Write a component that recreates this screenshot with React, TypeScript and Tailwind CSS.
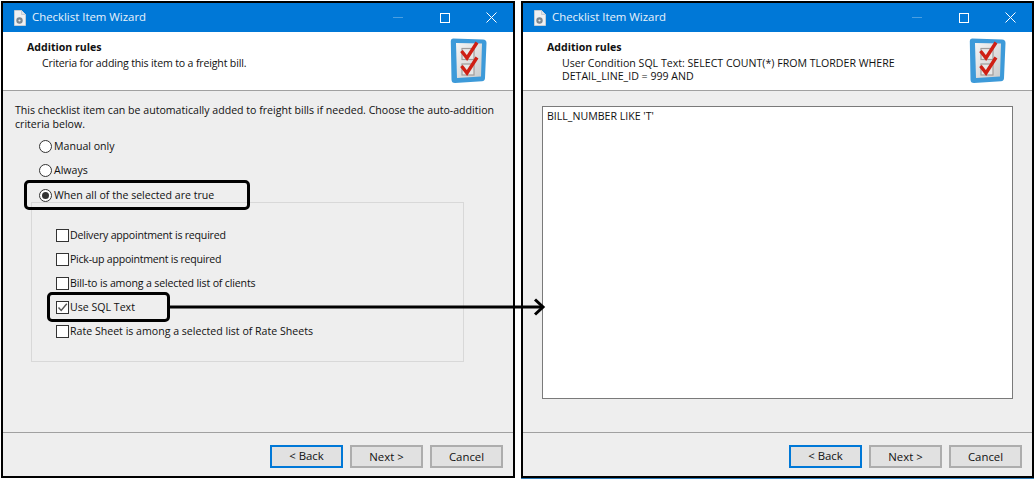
import React from "react";

const font = { fontFamily: '"Open Sans", "Noto Sans", sans-serif' };

function FileIcon() {
  return (
    <svg width="16" height="18" viewBox="0 0 16 18" className="shrink-0">
      <path d="M2.5 1.5h7l4 4v11h-11z" fill="#eef0f2" stroke="#c4ccd4" />
      <path d="M9.5 1.5v4h4" fill="#dfe3e7" stroke="#c4ccd4" />
      <circle cx="7.5" cy="11.5" r="3.2" fill="#7c8790" />
      <circle cx="7.5" cy="11.5" r="1.1" fill="#e6e9ec" />
    </svg>
  );
}

function ChecklistIcon() {
  return (
    <svg width="38" height="47" viewBox="0 0 38 47" className="shrink-0">
      <defs>
        <linearGradient id="pg" x1="0" y1="0" x2="1" y2="1">
          <stop offset="0" stopColor="#f5f5f5" />
          <stop offset="1" stopColor="#c9cbcc" />
        </linearGradient>
      </defs>
      <path d="M3 1.5 L33 2.5 Q36.5 2.7 36.5 6 L35 41 Q35 44 32 44.2 L5 46 Q1.5 46 1.5 42.5 L.8 4 Q.8 1.5 3 1.5z" fill="#3d9ad9" />
      <path d="M6 6 L32 6.5 L31 39.5 L7 41z" fill="url(#pg)" />
      <rect x="12" y="11.5" width="12" height="11" fill="#e8e8e8" stroke="#a09c9a" strokeWidth="1.2" />
      <rect x="12" y="27" width="12" height="11" fill="#e8e8e8" stroke="#a09c9a" strokeWidth="1.2" />
      <path d="M11.5 14 L17 21 L27 5.5" fill="none" stroke="#cf1f14" strokeWidth="3.4" />
      <path d="M11.5 29 L17 36 L27 20.5" fill="none" stroke="#cf1f14" strokeWidth="3.4" />
    </svg>
  );
}

function Radio({ label, checked, className }: { label: string; checked?: boolean; className: string }) {
  return (
    <div className={`flex items-center h-[16px] ${className}`}>
      <span className="w-[13px] h-[13px] rounded-full border border-[#333333] bg-white flex items-center justify-center shrink-0">
        {checked && <span className="w-[7px] h-[7px] rounded-full bg-[#333333]" />}
      </span>
      <span className="ml-[2px] pt-[2px] whitespace-nowrap">{label}</span>
    </div>
  );
}

function Check({ label, checked, tight }: { label: string; checked?: boolean; tight?: string }) {
  return (
    <div className="flex items-center h-[16px]">
      <span className="w-[13px] h-[13px] border border-[#333333] bg-white flex items-center justify-center shrink-0">
        {checked && (
          <svg width="11" height="11" viewBox="0 0 11 11">
            <path d="M1.5 5.5 L4.2 8.5 L9.8 1.8" fill="none" stroke="#555555" strokeWidth="1.4" />
          </svg>
        )}
      </span>
      <span className={`ml-[1px] pt-[2px] whitespace-nowrap ${tight ?? ""}`}>{label}</span>
    </div>
  );
}

function Btn({ label, primary }: { label: string; primary?: boolean }) {
  return (
    <div
      className={`w-[73px] h-[23px] flex items-center justify-center bg-[#e1e1e1] text-[#111111] text-[11.4px] ${
        primary ? "border-2 border-[#0078d7] pb-[2px]" : "border-2 border-[#adadad]"
      }`}
    >
      {label}
    </div>
  );
}

function Window({
  width,
  header,
  children,
  blueEdge,
}: {
  width: string;
  header: React.ReactNode;
  children: React.ReactNode;
  blueEdge?: boolean;
}) {
  return (
    <div className={`${width} h-[477px] border-2 border-black flex flex-col bg-[#eeeeee] relative`}>
      <div className="h-[29px] bg-[#0078d7] flex items-center text-white shrink-0">
        <div className="ml-[9px] mr-[4px] flex"><FileIcon /></div>
        <span className="text-[11.4px] text-[#eaf3fb] pb-[1px]">Checklist Item Wizard</span>
        <div className="ml-auto flex items-center h-full">
          <div className="w-[46px] flex justify-center"><div className="w-[10px] h-px bg-[#4a9fe2]" /></div>
          <div className="w-[48px] flex justify-center"><div className="w-[10px] h-[10px] border border-white" /></div>
          <div className="w-[44px] flex justify-center">
            <svg width="11" height="11" viewBox="0 0 11 11">
              <path d="M.5 .5 L10.5 10.5 M10.5 .5 L.5 10.5" stroke="#ffffff" strokeWidth="1" />
            </svg>
          </div>
        </div>
      </div>
      <div className="h-[58px] bg-white border-b border-[#a0a0a0] flex shrink-0 box-content">
        <div className="pl-[24px] pt-[9px] flex-1 leading-[13px]">{header}</div>
        <div className="pt-[5px] pr-[25px]"><ChecklistIcon /></div>
      </div>
      <div className="flex-1 relative">{children}</div>
      <div className="h-[31px] border-t border-[#a0a0a0] flex justify-end items-start gap-[7px] pt-[12px] pr-[10px] box-content shrink-0">
        <Btn label="< Back" primary />
        <Btn label="Next >" />
        <Btn label="Cancel" />
      </div>
      {blueEdge && <div className="absolute left-[-2px] right-[-2px] bottom-[-3px] h-px bg-[#2a7ab8]" />}
    </div>
  );
}

export default function App() {
  return (
    <div className="relative w-[1035px] h-[479px] bg-white overflow-hidden text-[10.6px] text-[#111111]" style={font}>
      <div className="flex gap-[6px] pl-px pt-px">
        <Window
          width="w-[514px]"
          header={
            <>
              <div className="font-bold mb-[3px]">Addition rules</div>
              <div className="pl-[15px] tracking-[-0.17px]">Criteria for adding this item to a freight bill.</div>
            </>
          }
        >
          <div className="pl-[12px] pt-[12px] flex flex-col">
            <p className="w-[490px] leading-[14px]">
              This checklist item can be automatically added to freight bills if needed. Choose the auto-addition criteria below.
            </p>
            <div className="pl-[24px] pt-[7px] flex flex-col">
              <Radio label="Manual only" className="" />
              <Radio label="Always" className="mt-[8px]" />
              <Radio label="When all of the selected are true" checked className="mt-[9px]" />
            </div>
            <div className="ml-[16px] -mt-px w-[433px] h-[160px] border border-[#d8d8d8] pl-[24px] pt-[24px] flex flex-col gap-[8px]">
              <Check label="Delivery appointment is required" tight="tracking-[-0.22px]" />
              <Check label="Pick-up appointment is required" tight="tracking-[-0.25px]" />
              <Check label="Bill-to is among a selected list of clients" tight="tracking-[-0.16px]" />
              <Check label="Use SQL Text" checked />
              <Check label="Rate Sheet is among a selected list of Rate Sheets" />
            </div>
          </div>
        </Window>
        <Window
          width="w-[513px]"
          blueEdge
          header={
            <>
              <div className="font-bold mb-[3px]">Addition rules</div>
              <div className="pl-[15px] w-[400px]">User Condition SQL Text: SELECT COUNT(*) FROM TLORDER WHERE DETAIL_LINE_ID = 999 AND</div>
            </>
          }
        >
          <div className="pl-[19px] pt-[15px]">
            <div className="w-[471px] h-[293px] bg-white border border-[#7a7a7a] px-[4px] pt-[2px]">BILL_NUMBER LIKE 'T'</div>
          </div>
        </Window>
      </div>
      <div className="absolute left-[24px] top-[180px] w-[226px] h-[30px] border-[3px] border-black rounded-[5px]" />
      <div className="absolute left-[47px] top-[292px] w-[123px] h-[30px] border-[3px] border-black rounded-[5px]" />
      <svg className="absolute left-[168px] top-[295px]" width="378" height="24" viewBox="0 0 378 24">
        <path d="M0 12 H374" stroke="#000000" strokeWidth="3" />
        <path d="M367 4.5 L375 12 L367 19.5" fill="none" stroke="#000000" strokeWidth="3" />
      </svg>
    </div>
  );
}
